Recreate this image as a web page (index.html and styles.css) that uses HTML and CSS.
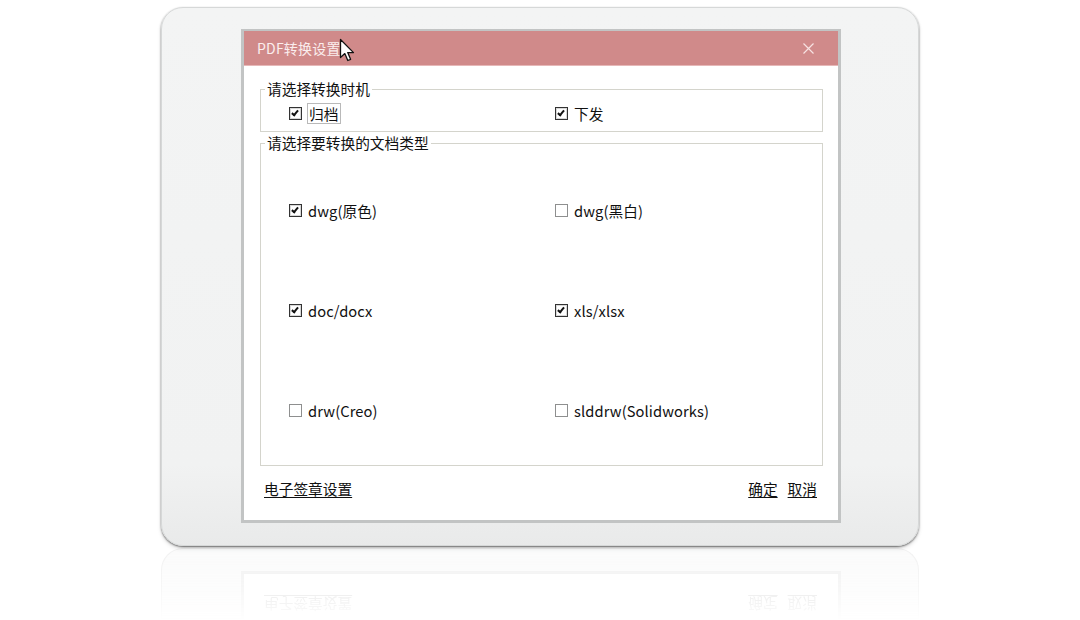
FILE: index.html
```html
<html lang="zh-CN">
  <head>
    <meta charset="UTF-8" />
    <meta name="viewport" content="width=device-width, initial-scale=1.0" />
    <title>PDF转换设置</title>

    <link rel="stylesheet" href="styles.css">
  </head>
  <body>
    <div class="frame">
      <div class="dialog">
        <div class="titlebar">
          <span class="title">PDF转换设置</span>
          <svg class="close" width="11" height="11" viewBox="0 0 11 11">
            <path d="M0.5 0.5 L10.5 10.5 M10.5 0.5 L0.5 10.5" stroke="#f7e2e2" stroke-width="1.2" />
          </svg>
          <svg class="cursor" width="18" height="26" viewBox="0 0 18 26">
            <path d="M1.5 1.5 L1.5 19.5 L5.8 15.6 L8.8 22.5 L11.6 21.3 L8.7 14.6 L14.5 14.6 Z" fill="#fff" stroke="#111" stroke-width="1.3" stroke-linejoin="round" />
          </svg>
        </div>

        <div class="content">
          <fieldset class="group group-time">
            <legend>请选择转换时机</legend>
            <div class="grid">
              <label class="check"><span class="box on"></span><span class="text focus">归档</span></label>
              <label class="check"><span class="box on"></span><span class="text">下发</span></label>
            </div>
          </fieldset>

          <fieldset class="group group-type">
            <legend>请选择要转换的文档类型</legend>
            <div class="grid">
              <label class="check"><span class="box on"></span><span class="text">dwg(原色)</span></label>
              <label class="check"><span class="box"></span><span class="text">dwg(黑白)</span></label>
              <label class="check"><span class="box on"></span><span class="text">doc/docx</span></label>
              <label class="check"><span class="box on"></span><span class="text">xls/xlsx</span></label>
              <label class="check"><span class="box"></span><span class="text">drw(Creo)</span></label>
              <label class="check"><span class="box"></span><span class="text">slddrw(Solidworks)</span></label>
            </div>
          </fieldset>

          <div class="footer">
            <a class="link">电子签章设置</a>
            <div class="actions">
              <a class="link">确定</a>
              <a class="link">取消</a>
            </div>
          </div>
        </div>
      </div>
    </div>

    <div class="reflection">
      <div class="mirror">
        <div class="dialog-tail">
          <div class="footer">
            <a class="link">电子签章设置</a>
            <div class="actions">
              <a class="link">确定</a>
              <a class="link">取消</a>
            </div>
          </div>
        </div>
      </div>
    </div>
  </body>
</html>
```

FILE: styles.css
```css
*,
*::after,
*::before {
  margin: 0;
  padding: 0;
  box-sizing: border-box;
}

:root {
  --font: "Microsoft YaHei", "Noto Sans CJK SC", sans-serif;
  --title-bg: #d08a8a;
  --dialog-border: #c2c4c4;
  --group-line: #d4d4cc;
  --frame-bg: #f1f2f2;
}

body {
  width: 1080px;
  height: 620px;
  background: #fff;
  font-family: var(--font);
  font-size: 14.7px;
  color: #111;
  overflow: hidden;
}

.frame {
  margin: 7px 0 0 161px;
  width: 758px;
  height: 539px;
  padding: 21px 0 0 79px;
  border: 1px solid #d6d8d8;
  border-radius: 22px;
  background: linear-gradient(#f3f4f4 0%, #f1f2f2 85%, #e9eaea 100%);
  box-shadow: 0 1px 2px rgba(0, 0, 0, 0.55), 0 3px 4px rgba(0, 0, 0, 0.12);
}

.dialog {
  width: 600px;
  height: 494px;
  border: 3px solid var(--dialog-border);
  border-top-width: 2px;
  background: #fff;
  display: flex;
  flex-direction: column;
}

.titlebar {
  position: relative;
  height: 35px;
  background: var(--title-bg);
  display: flex;
  align-items: center;
  justify-content: space-between;
  padding: 0 24px 0 13px;
  color: #fbeeee;
  border-bottom: 1px solid #e6b8b8;
}

.title {
  font-size: 14px;
  letter-spacing: 0.2px;
}

.cursor {
  position: absolute;
  left: 95px;
  top: 7px;
}

.content {
  flex: 1;
  padding: 14px 15px 0 16px;
  display: flex;
  flex-direction: column;
}

.group {
  border: 1px solid var(--group-line);
  box-shadow: inset 1px 1px 0 #fff;
  padding: 0;
  min-width: 0;
}

.group legend {
  padding: 0 2px;
  margin-left: 4px;
  line-height: 18px;
  color: #111;
}

.group-time {
  height: 52px;
}

.group-time .grid {
  margin-top: 5px;
}

.group-type {
  margin-top: 2px;
  height: 332px;
}

.group-type .grid {
  row-gap: 79px;
  margin-top: 48px;
}

.grid {
  display: grid;
  grid-template-columns: 266px 1fr;
  row-gap: 0;
  padding-left: 28px;
}

.check {
  display: flex;
  align-items: center;
  gap: 5px;
  height: 21px;
}

.box {
  width: 13px;
  height: 13px;
  border: 1px solid #8e8f8f;
  background: #fff;
  position: relative;
}

.box.on {
  border-color: #333;
  box-shadow: inset 0 0 0 1px #d8d8d8;
}

.box.on::after {
  content: "";
  position: absolute;
  left: 3px;
  top: 1px;
  width: 4px;
  height: 7px;
  border-right: 2px solid #111;
  border-bottom: 2px solid #111;
  transform: rotate(40deg);
}

.text {
  line-height: 19px;
  padding: 0 1px;
  letter-spacing: 0.1px;
}

.text.focus {
  border: 1px solid #b9b9b9;
  padding: 0 1px;
}

.footer {
  display: flex;
  justify-content: space-between;
  align-items: center;
  padding: 12px 6px 0 4px;
}

.actions {
  display: flex;
  gap: 10px;
}

.link {
  text-decoration: underline;
  text-underline-offset: 2px;
  color: #111;
  cursor: pointer;
}

.reflection {
  margin: 2px 0 0 161px;
  width: 758px;
  height: 74px;
  overflow: hidden;
  opacity: 0.14;
  -webkit-mask-image: linear-gradient(#000 0%, rgba(0, 0, 0, 0.5) 60%, transparent 100%);
  mask-image: linear-gradient(#000 0%, rgba(0, 0, 0, 0.5) 60%, transparent 100%);
}

.mirror {
  height: 74px;
  transform: scaleY(-1);
  border: 1px solid #999;
  border-top: none;
  border-radius: 0 0 22px 22px;
  background: #e2e3e3;
  padding: 0 79px 0 79px;
}

.dialog-tail {
  width: 600px;
  height: 51px;
  border: 3px solid #999;
  border-top: none;
  background: #fff;
}

.dialog-tail .footer {
  padding: 7px 21px 0 20px;
}
```
